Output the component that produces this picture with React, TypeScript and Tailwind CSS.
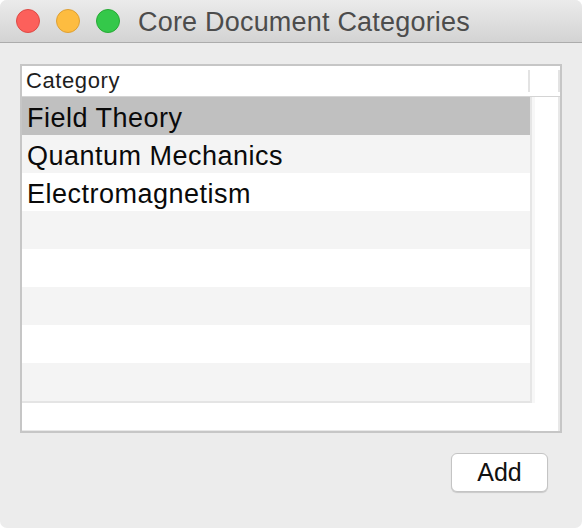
import React from "react";

const rows = ["Field Theory", "Quantum Mechanics", "Electromagnetism", "", "", "", "", ""];

const App = () => {
  return (
    <div className="w-[582px] h-[528px] bg-white" style={{ fontFamily: '"Liberation Sans", Arial, sans-serif' }}>
      <div className="w-full h-full bg-[#ececec] rounded-[7px] overflow-hidden flex flex-col">
        {/* Title bar */}
        <div className="h-[43px] shrink-0 flex items-center pl-[16px] bg-gradient-to-b from-[#ebebeb] to-[#d3d3d3] border-b border-[#acacac]">
          <div className="flex gap-[16px]">
            <span className="w-6 h-6 rounded-full bg-[#fc605b] border border-[#de4a45]" />
            <span className="w-6 h-6 rounded-full bg-[#fdbc40] border border-[#dea034]" />
            <span className="w-6 h-6 rounded-full bg-[#34c84a] border border-[#27aa35]" />
          </div>
          <span className="ml-[18px] pt-[3px] text-[27px] leading-none tracking-[0.2px] text-[#4c4c4c]">
            Core Document Categories
          </span>
        </div>

        {/* Content */}
        <div className="pt-[21px] px-[20px]">
          {/* Table */}
          <div className="h-[369px] border-2 border-[#c6c6c6] bg-white flex flex-col">
            {/* Header */}
            <div className="h-[31px] shrink-0 flex border-b border-[#d4d4d4]">
              <div className="w-[506px] pl-[4px] text-[22px] leading-[30px] tracking-[0.6px] text-[#1e1e1e]">Category</div>
              <div className="w-[2px] h-[22px] mt-[4px] bg-[#e3e3e3]" />
              <div className="w-[28px]" />
              <div className="w-[2px] h-[22px] mt-[4px] bg-[#e3e3e3]" />
            </div>

            {/* Body */}
            <div className="flex-1 flex">
              <div className="w-[508px] flex flex-col">
                {rows.map((name, i) => (
                  <div
                    key={i}
                    className={
                      i === 0
                        ? "h-[38px] pl-[5px] pt-[4px] text-[27px] leading-[34px] tracking-[0.5px] text-[#0a0a0a] bg-[#c0c0c0]"
                        : i % 2 === 1
                        ? "h-[38px] pl-[5px] pt-[4px] text-[27px] leading-[34px] tracking-[0.5px] text-[#0a0a0a] bg-[#f4f4f4]"
                        : "h-[38px] pl-[5px] pt-[4px] text-[27px] leading-[34px] tracking-[0.5px] text-[#0a0a0a] bg-white"
                    }
                  >
                    {name}
                  </div>
                ))}
                <div className="h-[2px] bg-[#e4e4e4]" />
                <div className="flex-1 border-b border-[#e8e8e8]" />
              </div>
              {/* Vertical scroller area */}
              <div className="flex-1 flex">
                <div className="h-[306px] w-[2px] bg-[#e6e6e6]" />
                <div className="h-[306px] w-[3px] bg-[#f7f7f7]" />
                <div className="flex-1" />
                <div className="w-[2px] bg-[#e8e8e8]" />
              </div>
            </div>
          </div>

          {/* Buttons */}
          <div className="flex justify-end pr-[14px] mt-[20px]">
            <button className="w-[97px] h-[39px] bg-white border border-[#c4c4c4] rounded-[6px] shadow-[0_1px_1px_rgba(0,0,0,0.15)] text-[25px] leading-none text-[#111]">
              Add
            </button>
          </div>
        </div>
      </div>
    </div>
  );
};

export default App;
